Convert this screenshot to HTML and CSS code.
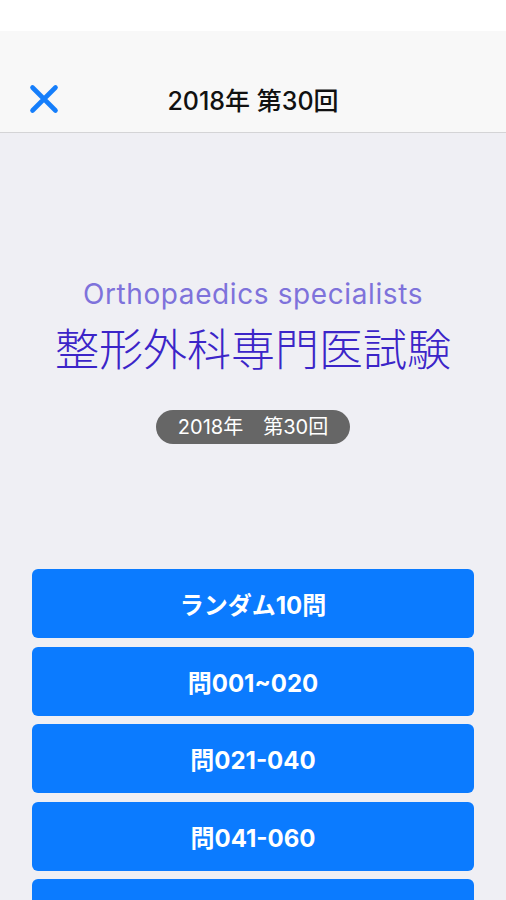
FILE: index.html
```html
<!DOCTYPE html>
<html lang="ja">
<head>
  <meta charset="UTF-8" />
  <title>2018年 第30回</title>
  <link rel="stylesheet" href="styles.css">
</head>
<body>

  <div class="statusbar"></div>

  <div class="navbar">
    <div class="nav-row">
      <a href="#" class="btn-close" aria-label="閉じる">
        <svg width="30" height="30" viewBox="0 0 30 30">
          <path d="M3.5 3.5 L26.5 26.5 M26.5 3.5 L3.5 26.5" stroke="#157efb" stroke-width="4.6" stroke-linecap="round" fill="none"/>
        </svg>
      </a>
      <div class="nav-title">2018年 第30回</div>
      <div></div>
    </div>
  </div>

  <div class="main-content">
    <div class="hero">
      <p class="subtitle">Orthopaedics specialists</p>
      <h1 class="title">整形外科専門医試験</h1>
      <span class="badge">2018年　第30回</span>
    </div>

    <div class="menu">
      <a href="#" class="btn-menu">ランダム10問</a>
      <a href="#" class="btn-menu">問001~020</a>
      <a href="#" class="btn-menu">問021-040</a>
      <a href="#" class="btn-menu">問041-060</a>
      <a href="#" class="btn-menu">問061-080</a>
    </div>
  </div>

</body>
</html>
```

FILE: styles.css
```css
body {
  margin: 0;
  font-family: Inter, "Noto Sans CJK JP", sans-serif;
  background: #efeff4;
  height: 900px;
  overflow: hidden;
}
.statusbar {
  height: 31px;
  background: #ffffff;
}
.navbar {
  background: #f8f8f8;
  border-bottom: 1px solid #d4d4d6;
  padding: 50px 0 15px;
}
.nav-row {
  display: grid;
  grid-template-columns: 1fr auto 1fr;
  align-items: center;
  height: 36px;
}
.btn-close {
  display: flex;
  align-items: center;
  padding-left: 29px;
}
.nav-title {
  font-size: 25px;
  font-weight: 500;
  color: #111;
}
.hero {
  display: flex;
  flex-direction: column;
  align-items: center;
  padding-top: 144px;
}
.subtitle {
  margin: 0;
  font-size: 28px;
  line-height: 34px;
  letter-spacing: 0.6px;
  color: #7e72db;
}
.title {
  margin: 8px 0 0;
  font-family: "Noto Sans CJK JP", sans-serif;
  font-size: 44px;
  font-weight: 300;
  line-height: 56px;
  color: #3b25c8;
}
.badge {
  margin-top: 35px;
  width: 194px;
  height: 34px;
  line-height: 34px;
  border-radius: 17px;
  background: #666666;
  color: #ffffff;
  text-align: center;
  font-size: 20px;
}
.menu {
  display: flex;
  flex-direction: column;
  gap: 8.5px;
  margin: 125px 32px 0;
}
.btn-menu {
  display: flex;
  justify-content: center;
  align-items: center;
  height: 69px;
  border-radius: 6px;
  background: #0b7bff;
  color: #ffffff;
  text-decoration: none;
  font-size: 24px;
  font-weight: 700;
}
```
